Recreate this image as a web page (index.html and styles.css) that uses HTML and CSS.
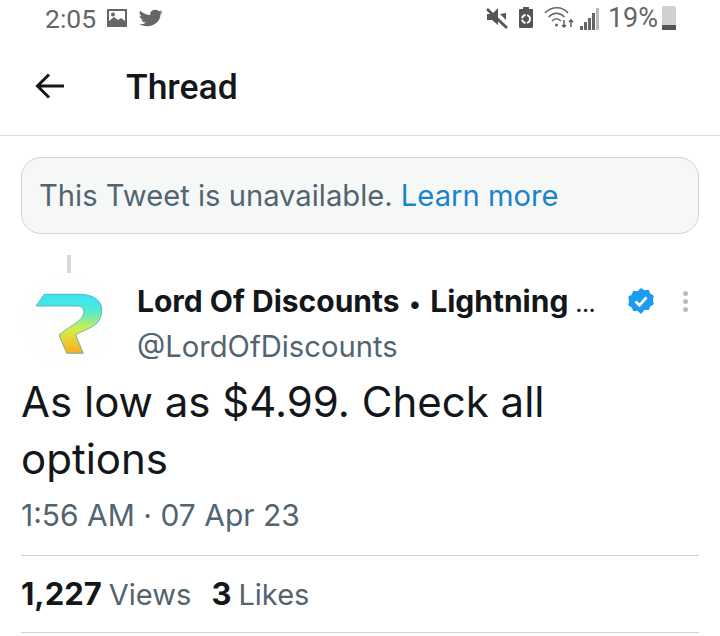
FILE: index.html
```html
<!DOCTYPE html>
<html lang="en">
<head>
    <meta charset="UTF-8">
    <meta name="viewport" content="width=device-width, initial-scale=1.0">
    <title>Thread</title>
    <link rel="stylesheet" href="styles.css">
</head>
<body>
    <div class="status-bar">
        <div class="status-left">
            <span class="clock">2:05</span>
            <svg width="22" height="20" viewBox="0 0 22 20">
                <path fill="#666" fill-rule="evenodd" d="M1 1h20v18H1zM3 3v10l5-4 4 3 3-2 4 3V3z"/>
                <circle cx="7" cy="6.500" r="2" fill="#666"/>
            </svg>
            <svg class="bird" width="24" height="20" viewBox="0 0 24 24" preserveAspectRatio="none">
                <path fill="#666" d="M23.600 4.600c-.9.400-1.800.7-2.800.8 1-.6 1.800-1.600 2.100-2.700-.9.600-2 1-3.100 1.200a4.900 4.900 0 0 0-8.400 4.500C7.300 8.200 3.700 6.200 1.300 3.200A4.900 4.900 0 0 0 2.800 9.800c-.8 0-1.600-.2-2.200-.6 0 2.400 1.700 4.400 3.900 4.900-.7.200-1.500.2-2.200.1.600 2 2.400 3.400 4.600 3.400A9.900 9.900 0 0 1 0 19.600 14 14 0 0 0 7.500 21.800c9.100 0 14.300-7.700 14-14.600 1-.7 1.800-1.600 2.100-2.600z"/>
            </svg>
        </div>
        <div class="status-right">
            <svg class="mute" width="22" height="24" viewBox="0 0 22 24">
                <path fill="#555" d="M1 8h5l6-6v17l-6-5H1z"/>
                <path stroke="#555" stroke-width="2.800" d="M1 3l20 19"/>
                <path fill="#555" d="M14 8l6 6V7z"/>
            </svg>
            <svg class="saver" width="16" height="24" viewBox="0 0 16 24">
                <path fill="#555" d="M5 1h6v2h3a1 1 0 0 1 1 1v17a1 1 0 0 1-1 1H2a1 1 0 0 1-1-1V4a1 1 0 0 1 1-1h3z"/>
                <circle cx="8" cy="13" r="4" fill="none" stroke="#fff" stroke-width="1.800" stroke-dasharray="5 1.500"/>
            </svg>
            <svg class="wifi" width="31" height="24" viewBox="0 0 31 24">
                <path fill="none" stroke="#666" stroke-width="1.500" d="M1 7c7-7 17-7 23 0M4.500 11c5-5 11-5 16 0M8 15c3-3 6-3 9 0"/>
                <circle cx="12.500" cy="19" r="1.500" fill="#666"/>
                <path fill="none" stroke="#555" stroke-width="1.400" d="M20 14v7M18 19l2 2 2-2M27 21v-7M25 16l2-2 2 2"/>
            </svg>
            <div class="signal">
                <i class="bar-1"></i><i class="bar-2"></i><i class="bar-3"></i><i class="bar-4"></i><i class="bar-5"></i>
            </div>
            <span class="percent">19%</span>
            <div class="battery"><div class="battery-fill"></div></div>
        </div>
    </div>

    <div class="top-bar">
        <svg width="30" height="28" viewBox="0 0 30 28">
            <path fill="none" stroke="#14171a" stroke-width="3" d="M29 14H3M14 2.500L2.500 14 14 25.500"/>
        </svg>
        <h1 class="title">Thread</h1>
    </div>

    <div class="notice">This Tweet is unavailable. <span class="link">Learn more</span></div>

    <div class="thread-line"></div>

    <div class="tweet-head">
        <svg class="avatar" width="90" height="90" viewBox="0 0 90 90">
            <defs>
                <linearGradient id="logoFill" x1="0" y1="0" x2="0" y2="1">
                    <stop offset="0" stop-color="#35e4fb"/>
                    <stop offset="0.3" stop-color="#56ead0"/>
                    <stop offset="0.6" stop-color="#d6ee45"/>
                    <stop offset="1" stop-color="#fbab1c"/>
                </linearGradient>
            </defs>
            <circle cx="45" cy="45" r="45" fill="#fefefe"/>
            <path fill="url(#logoFill)" stroke="#3f9fb0" stroke-width="0.700" d="M14 30L22.300 18.300H59.700C72 19 80 25 79.700 34C79.500 40 78 44 75 47C70 52 60 55 53.700 59L61.300 77.300H44.700L37 59C45 52 56 47 59.700 41.700C63 37 63 31 56.300 30Z"/>
        </svg>
        <div class="author">
            <div class="name-row">
                <span class="name">Lord Of Discounts <span class="bullet">•</span> Lightning <span class="dots">...</span></span>
                <svg class="badge" width="28" height="28" viewBox="0 0 28 28">
                    <path fill="#1d9bf0" d="M14 1l3.500 2.200 4.100-.4 1.700 3.800 3.500 2.200-.9 4.200.9 4.200-3.500 2.200-1.700 3.800-4.100-.4L14 27l-3.500-3.200-4.100.4-1.700-3.800L1.200 18.200 2.100 14l-.9-4.200 3.500-2.200 1.700-3.800 4.100.4z"/>
                    <path fill="none" stroke="#fff" stroke-width="2.800" d="M8.500 14.500l4 3.800 7-8"/>
                </svg>
                <div class="more"><i></i><i></i><i></i></div>
            </div>
            <div class="handle">@LordOfDiscounts</div>
        </div>
    </div>

    <p class="tweet-text">As low as $4.99. Check all options</p>
    <div class="tweet-time">1:56 AM · 07 Apr 23</div>

    <div class="stats">
        <b>1,227</b><span class="stat-label">Views</span>
        <b class="likes">3</b><span class="stat-label">Likes</span>
    </div>
</body>
</html>
```

FILE: styles.css
```css
* { margin: 0; padding: 0; box-sizing: border-box; }
body { font-family: Inter, Roboto, sans-serif; background-color: #fff; color: #14171a; width: 720px; height: 636px; overflow: hidden; }
.status-bar { height: 36px; display: flex; justify-content: space-between; align-items: center; padding: 0 44px 0 45px; color: #666; }
.status-left, .status-right { display: flex; align-items: center; }
.status-left { gap: 9px; }
.bird { margin-left: 2px; }
.clock, .percent { font-family: Roboto, sans-serif; color: #666; }
.clock { font-size: 26.500px; margin-right: 1px; }
.percent { font-size: 27px; margin-left: 9px; }
.mute { margin-right: 10px; }
.saver { margin-right: 10px; }
.wifi { margin-right: 5px; }
.signal { display: flex; align-items: flex-end; gap: 1px; height: 24px; }
.signal i { width: 3px; background: #666; }
.bar-1 { height: 4px; }
.bar-2 { height: 8px; }
.bar-3 { height: 12px; }
.bar-4 { height: 17px; }
.signal .bar-5 { height: 22px; background: #bbb; }
.battery { width: 14px; height: 24px; margin-left: 4px; background: #d0d0d0; display: flex; align-items: flex-end; border-radius: 2px; }
.battery-fill { width: 100%; height: 5px; background: #555; }
.top-bar { height: 100px; display: flex; align-items: center; gap: 61px; padding: 0 0 0 35px; border-bottom: 1px solid #d9dcde; }
.title { font-family: Roboto, sans-serif; font-size: 35.500px; font-weight: 500; margin-top: 2px; }
.notice { margin: 21px 21px 0; height: 77px; padding: 0 17px; display: flex; align-items: center; white-space: pre; background: #f6f8f8; border: 1px solid #ced6da; border-radius: 20px; font-size: 29.200px; color: #536471; }
.link { color: #1d83c9; }
.thread-line { width: 4px; height: 18px; margin: 21px 0 0 67px; background: #d5d9dc; }
.tweet-head { display: flex; margin-top: 3px; padding-left: 22px; }
.avatar { flex: none; }
.author { margin-left: 25px; }
.name-row { display: flex; align-items: center; height: 50px; }
.name { font-size: 30px; font-weight: 700; white-space: nowrap; }
.bullet { margin: 0 2.500px; font-size: 24px; }
.dots { font-size: 20px; }
.badge { margin-left: 31px; }
.more { display: flex; flex-direction: column; gap: 3px; margin-left: 28px; }
.more i { width: 5px; height: 5px; border-radius: 50%; background: #b8bfc4; }
.handle { font-size: 29.200px; color: #536471; margin-top: 3px; }
.tweet-text { margin-top: 7px; padding: 0 100px 0 21px; font-size: 42px; line-height: 57px; }
.tweet-time { margin: 10px 21px 0; padding-bottom: 22px; font-size: 30px; color: #536471; border-bottom: 1px solid #ced3d6; }
.stats { margin: 0 21px; padding: 19px 0 20px; font-size: 29px; border-bottom: 1px solid #ced3d6; color: #14171a; }
.stats b { font-size: 31px; font-weight: 700; }
.stat-label { color: #536471; margin-left: 7px; }
.likes { margin-left: 12px; }
```
